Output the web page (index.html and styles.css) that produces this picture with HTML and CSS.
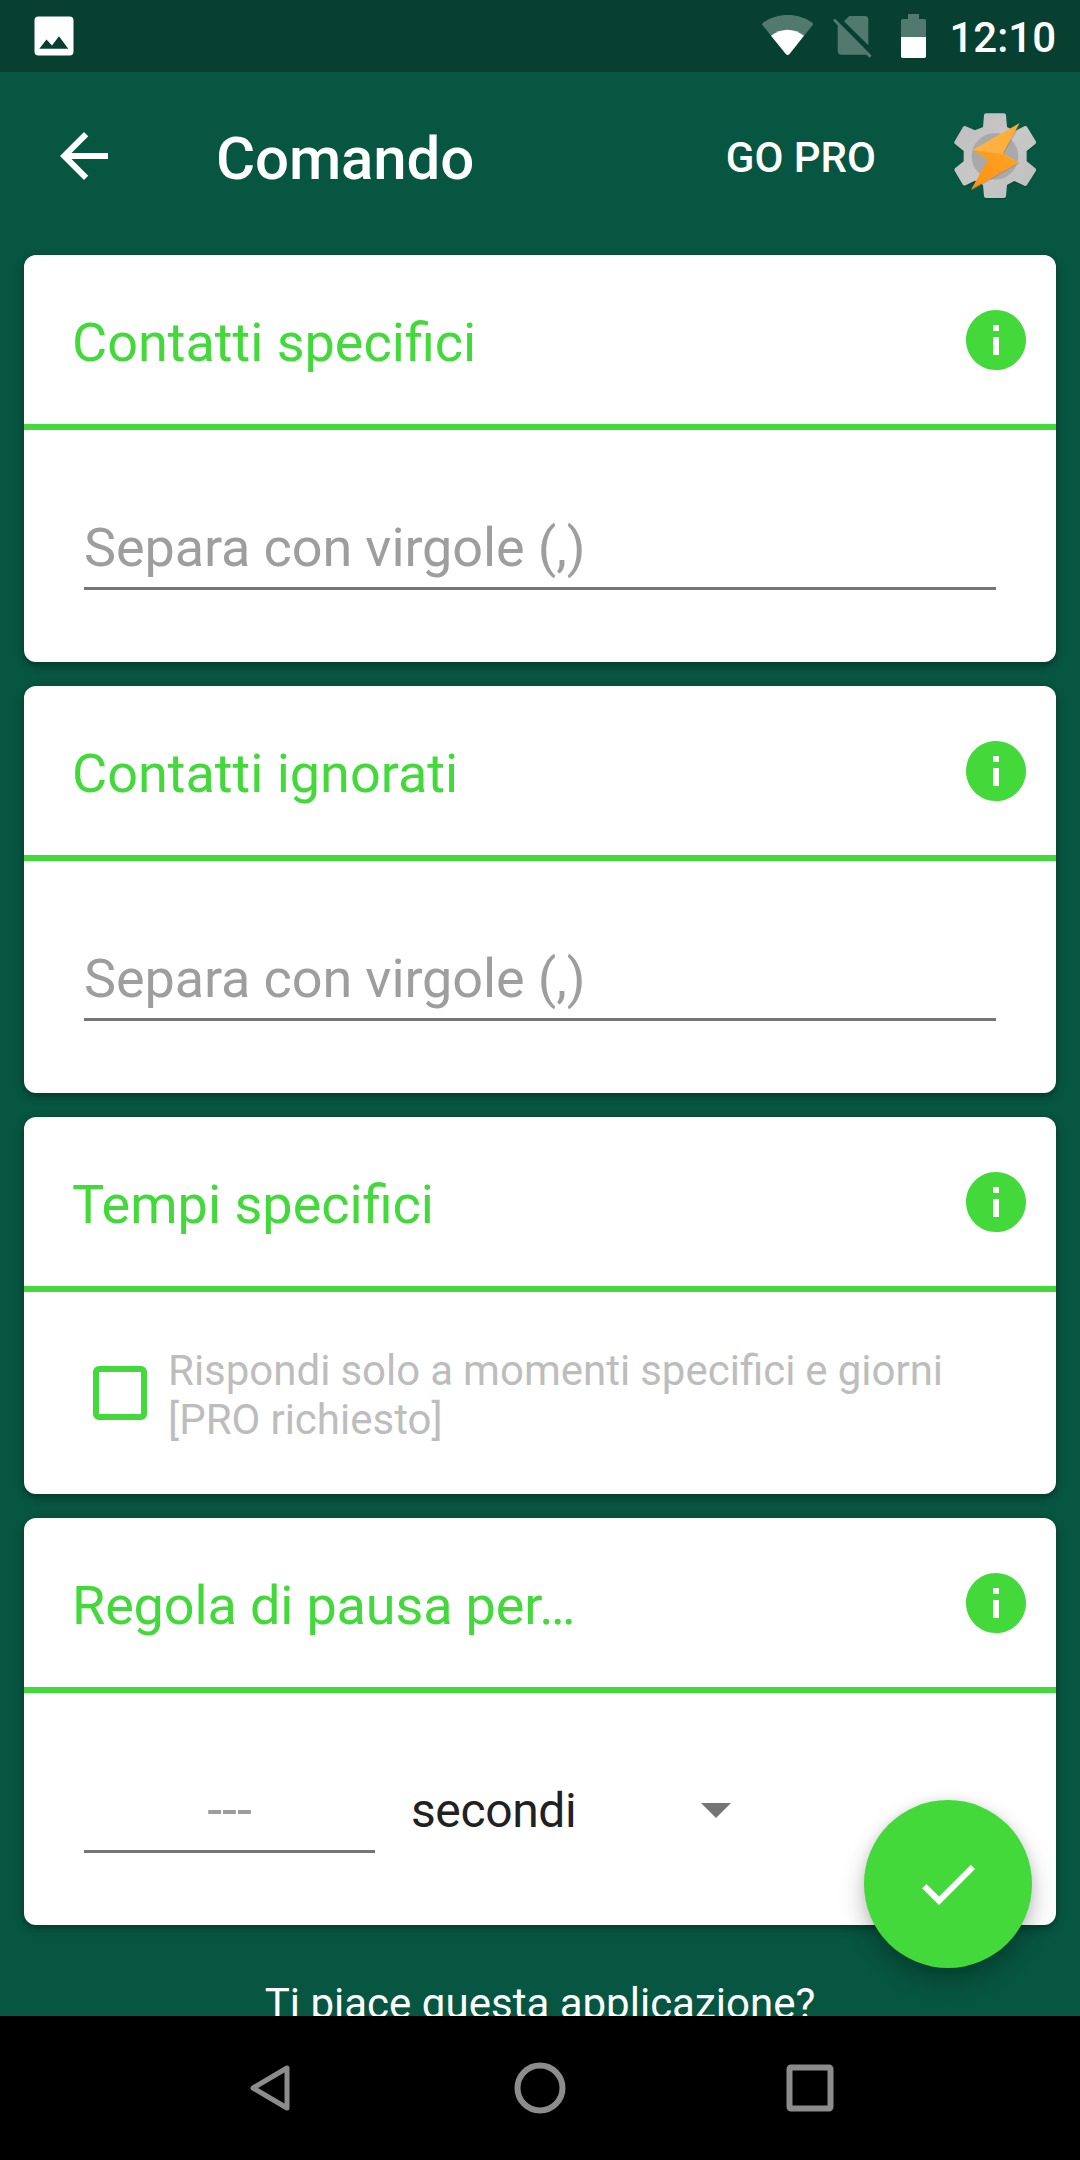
FILE: index.html
```html
<!DOCTYPE html>
<html lang="it">

<head>
    <meta charset="utf-8" />
    <title>Comando</title>
    <link rel="stylesheet" href="styles.css">
</head>

<body>
    <svg class="defs" width="0" height="0">
        <symbol id="info" viewBox="0 0 24 24">
            <path d="M12 2C6.48 2 2 6.48 2 12s4.48 10 10 10 10-4.48 10-10S17.52 2 12 2zm1 15h-2v-6h2v6zm0-8h-2V7h2v2z" />
        </symbol>
    </svg>

    <div id="statusBar">
        <svg class="picture" viewBox="0 0 40 40" width="40" height="40">
            <path fill="#fff" fill-rule="evenodd" d="M4.500 .5h31a4 4 0 0 1 4 4v31a4 4 0 0 1-4 4h-31a4 4 0 0 1-4-4v-31a4 4 0 0 1 4-4zM5.300 32.700h29L25 20.200l-7 9.300-5.500-6z" />
        </svg>
        <div class="statusIcons">
            <svg class="wifi" viewBox="186 42 153 132" width="51" height="44">
                <path fill="#fff" fill-opacity=".3" d="M187 75q-2-4 2-7c44-31 105-31 148 0q4 3 1 7l-26 33c-28-22-70-22-98 0z" />
                <path fill="#fff" d="M213 107c30-24 70-24 99 0l-44 56q-5 4-10 0z" />
            </svg>
            <svg class="sim" viewBox="398 42 117 132" width="39" height="44">
                <g fill="#fff" fill-opacity=".3">
                    <path d="M447 48h46q11 0 11 11v77l-73-72z" />
                    <path d="M399 63q-1-6 6-6l108 109q0 7-7 6l-8-8h-75q-11 0-11-11V76z" />
                </g>
            </svg>
            <svg class="battery" viewBox="603 42 75 132" width="25" height="44">
                <path fill="#fff" fill-opacity=".3" d="M603 111V62q0-5 5-5h16V42h33v15h16q5 0 5 5v49z" />
                <path fill="#fff" d="M603 111h75v58q0 5-5 5h-65q-5 0-5-5z" />
            </svg>
            <span class="clock">12:10</span>
        </div>
    </div>

    <div id="toolBar">
        <svg class="back" viewBox="0 0 24 24" width="72" height="72">
            <path fill="#fff" d="M20 11H7.830l5.590-5.590L12 4l-8 8 8 8 1.410-1.410L7.830 13H20v-2z" />
        </svg>
        <h1>Comando</h1>
        <span class="goPro">GO PRO</span>
        <svg class="tasker" viewBox="60 60 270 280" width="90" height="93.330">
            <defs>
                <linearGradient id="gear" x1="0" y1="0" x2="1" y2="1">
                    <stop offset="0" stop-color="#bdbdbd" />
                    <stop offset=".5" stop-color="#c8c8c8" />
                    <stop offset="1" stop-color="#bebebe" />
                </linearGradient>
                <linearGradient id="boltTop" x1="1" y1="0" x2="0" y2="1">
                    <stop offset="0" stop-color="#ffa92f" />
                    <stop offset="1" stop-color="#ffb74d" />
                </linearGradient>
                <linearGradient id="boltBottom" x1="1" y1="0" x2="0" y2="1">
                    <stop offset="0" stop-color="#ffa42c" />
                    <stop offset="1" stop-color="#ff900c" />
                </linearGradient>
            </defs>
            <path fill="#04402f" transform="translate(0 4)" opacity=".6" d="M168 70h54q5 0 6 5l3 36 24 12 28-14q5-3 8 1l26 43q3 6-1 9l-26 21v31l26 21q4 3 1 9l-26 41q-3 4-8 2l-30-14-22 12-3 34q-1 5-6 5h-54q-5 0-6-5l-3-34-24-13-28 14q-5 2-8-1l-25-42q-2-5 1-8l26-21v-31l-26-21q-4-3-1-8l25-43q3-4 8-2l28 12 24-10 3-36q1-5 6-5z" />
            <path fill="url(#gear)" d="M168 70h54q5 0 6 5l3 36 24 12 28-14q5-3 8 1l26 43q3 6-1 9l-26 21v31l26 21q4 3 1 9l-26 41q-3 4-8 2l-30-14-22 12-3 34q-1 5-6 5h-54q-5 0-6-5l-3-34-24-13-28 14q-5 2-8-1l-25-42q-2-5 1-8l26-21v-31l-26-21q-4-3-1-8l25-43q3-4 8-2l28 12 24-10 3-36q1-5 6-5z" />
            <circle cx="195" cy="199" r="70" fill="#a9a9a9" />
            <path fill="#777" opacity=".4" d="M271 104l-50 88 47 28-142 82 47-90z" />
            <path fill="url(#boltTop)" d="M269 99l-50 91 47 28-138-38z" />
            <path fill="url(#boltBottom)" d="M128 180l91 12 47 26-143 81 51-90z" />
        </svg>
    </div>

    <div id="content">
        <div class="card">
            <div class="cardHeader">
                <h2>Contatti specifici</h2>
                <svg class="info"><use href="#info" /></svg>
            </div>
            <div class="cardBody">
                <input type="text" placeholder="Separa con virgole (,)" />
            </div>
        </div>

        <div class="card">
            <div class="cardHeader">
                <h2>Contatti ignorati</h2>
                <svg class="info"><use href="#info" /></svg>
            </div>
            <div class="cardBody">
                <input type="text" placeholder="Separa con virgole (,)" />
            </div>
        </div>

        <div class="card">
            <div class="cardHeader">
                <h2>Tempi specifici</h2>
                <svg class="info"><use href="#info" /></svg>
            </div>
            <div class="cardBody times">
                <span class="checkbox"></span>
                <p>Rispondi solo a momenti specifici e giorni<br>[PRO richiesto]</p>
            </div>
        </div>

        <div class="card">
            <div class="cardHeader">
                <h2 class="tight">Regola di pausa per…</h2>
                <svg class="info"><use href="#info" /></svg>
            </div>
            <div class="cardBody pause">
                <input type="text" placeholder="---" />
                <div class="spinner">
                    <span>secondi</span>
                    <span class="caret"></span>
                </div>
            </div>
        </div>

        <p class="like">Ti piace questa applicazione?</p>
    </div>

    <div id="fab">
        <svg viewBox="0 0 24 24" width="72" height="72">
            <path fill="#fff" d="M9 16.200L4.800 12l-1.400 1.400L9 19 21 7l-1.400-1.400L9 16.200z" />
        </svg>
    </div>

    <div id="navBar">
        <svg viewBox="0 0 60 60" width="60" height="60">
            <path d="M47 10v40L13 30z" stroke-width="5" stroke-linejoin="round" />
        </svg>
        <svg viewBox="0 0 60 60" width="60" height="60">
            <circle cx="30" cy="30" r="22.500" />
        </svg>
        <svg viewBox="0 0 60 60" width="60" height="60">
            <rect x="9.500" y="9.500" width="41" height="41" rx="1.500" stroke-linejoin="round" />
        </svg>
    </div>
</body>

</html>
```

FILE: styles.css
```css
* {
    box-sizing: border-box;
}

body {
    position: relative;
    display: flex;
    flex-direction: column;
    width: 1080px;
    height: 2160px;
    margin: 0;
    overflow: hidden;
    background: #075641;
    font-family: Roboto, sans-serif;
}

h1, h2, p {
    margin: 0;
}

svg {
    display: block;
    flex: none;
}

.defs {
    position: absolute;
}

#statusBar {
    display: flex;
    align-items: center;
    justify-content: space-between;
    height: 72px;
    padding: 0 24px 0 34px;
    background: #074030;
}

.statusIcons {
    display: flex;
    align-items: center;
}

.sim {
    margin-left: 20px;
}

.battery {
    margin-left: 29px;
}

.clock {
    width: 130px;
    padding-top: 2px;
    text-align: right;
    font-size: 42px;
    font-weight: 500;
    color: #fff;
}

#toolBar {
    display: flex;
    align-items: center;
    height: 168px;
    padding: 0 40px 0 48px;
    color: #fff;
}

#toolBar h1 {
    flex-grow: 1;
    padding: 4px 0 0 96px;
    font-size: 60px;
    font-weight: 500;
    letter-spacing: -.15px;
}

.goPro {
    margin-right: 74px;
    padding-top: 2px;
    font-size: 42px;
    font-weight: 500;
}

.tasker {
    margin-top: 2px;
}

#content {
    flex: 1;
    min-height: 0;
    padding: 15px 24px 0;
    overflow: hidden;
}

.card {
    margin-bottom: 24px;
    border-radius: 12px;
    background: #fff;
    box-shadow: 0 3px 8px rgba(0, 0, 0, .4);
}

.cardHeader {
    display: flex;
    align-items: center;
    justify-content: space-between;
    height: 175px;
    padding: 0 24px 0 48px;
    border-bottom: 6px solid #43d93b;
}

.cardHeader h2 {
    padding-top: 5px;
    font-size: 54px;
    font-weight: 400;
    color: #43d93b;
}

.cardHeader .tight {
    letter-spacing: -.15px;
}

.info {
    width: 72px;
    height: 72px;
    fill: #43d93b;
}

.cardBody {
    height: 232px;
    padding: 78px 60px 0;
}

input {
    display: block;
    width: 100%;
    height: 82px;
    padding: 0 0 1px;
    border: 0;
    border-bottom: 3px solid #757575;
    background: none;
    font-family: inherit;
    font-size: 54px;
    letter-spacing: -.12px;
}

input::placeholder {
    color: #9e9e9e;
    opacity: 1;
}

.times {
    display: flex;
    align-items: center;
    height: 202px;
    padding: 0 69px;
}

.checkbox {
    width: 54px;
    height: 54px;
    margin-right: 21px;
    border: 6px solid #43d93b;
    border-radius: 6px;
}

.times p {
    padding-top: 4px;
    font-size: 42px;
    line-height: 49px;
    word-spacing: -.4px;
    white-space: nowrap;
    color: #bdbdbd;
}

.pause {
    display: flex;
}

.pause input {
    width: 291px;
    padding-bottom: 3px;
    text-align: center;
}

.spinner {
    display: flex;
    align-items: center;
    justify-content: space-between;
    width: 320px;
    height: 78px;
    margin-left: 36px;
    font-size: 48px;
    letter-spacing: -.4px;
    color: #212121;
}

.caret {
    border: 15px solid transparent;
    border-top-color: #757575;
    border-bottom: 0;
}

.like {
    margin-top: 54px;
    text-align: center;
    font-size: 42px;
    line-height: 49px;
    color: #fff;
}

#fab {
    position: absolute;
    right: 48px;
    bottom: 192px;
    display: flex;
    align-items: center;
    justify-content: center;
    width: 168px;
    height: 168px;
    border-radius: 50%;
    background: #43d93b;
    box-shadow: 0 12px 24px rgba(0, 0, 0, .26), 0 0 10px rgba(0, 0, 0, .08);
}

#navBar {
    position: relative;
    display: flex;
    justify-content: center;
    align-items: center;
    gap: 210px;
    height: 144px;
    background: #000;
}

#navBar svg {
    fill: none;
    stroke: #8c8c8c;
    stroke-width: 6;
}
```
